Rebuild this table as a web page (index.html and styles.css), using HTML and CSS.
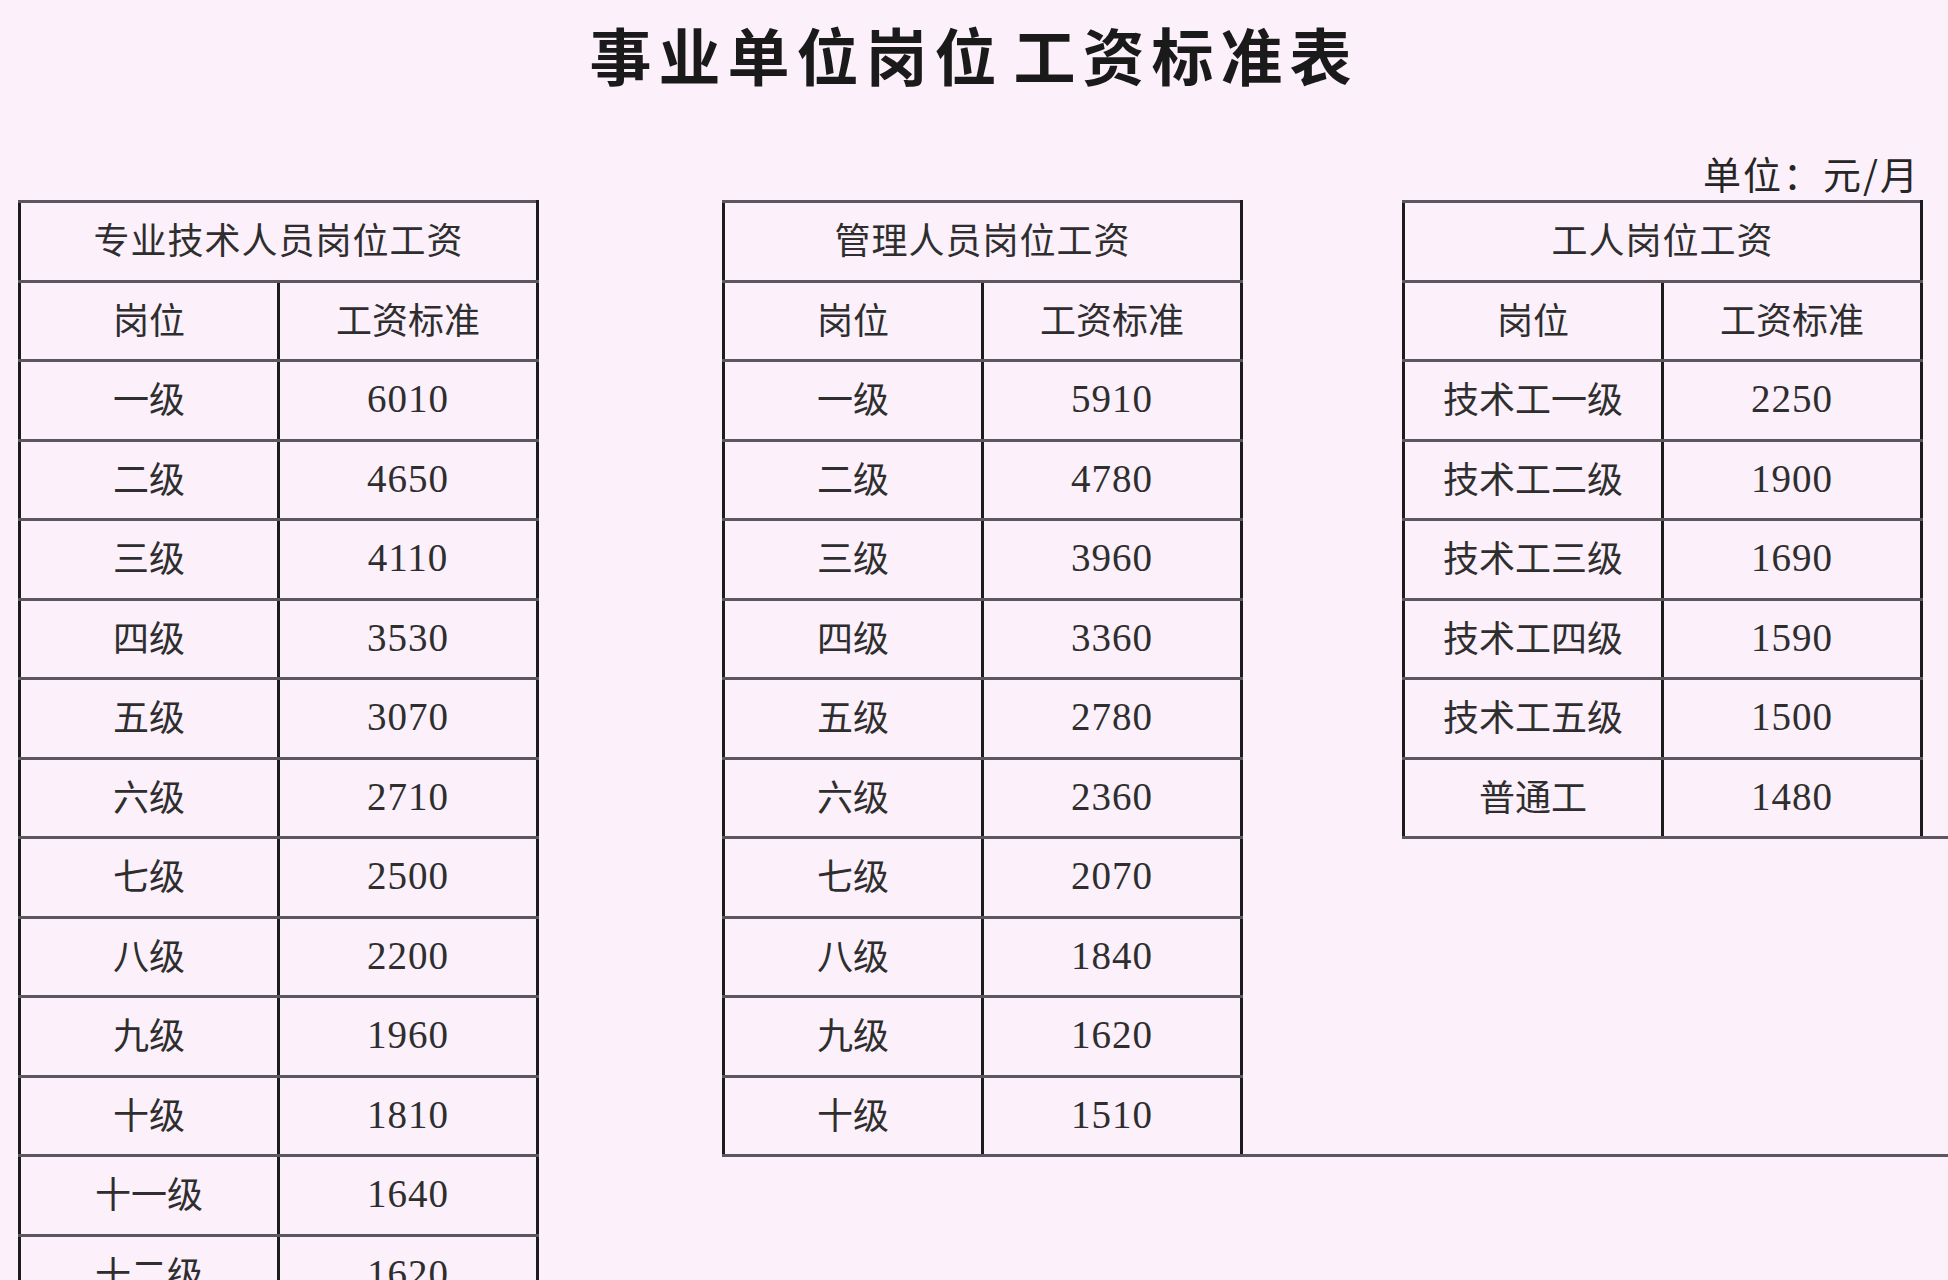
FILE: index.html
```html
<!DOCTYPE html>
<html lang="zh-CN">
<head>
<meta charset="utf-8">
<title>事业单位岗位工资标准表</title>
<link rel="stylesheet" href="styles.css">
</head>
<body>
<h1 class="title">事业单位岗位<span class="title-gap">工资标准表</span></h1>
<div class="unit">单位：元/月</div>
<main class="tables">
  <div class="tbl tbl-pro">
    <table>
      <colgroup><col class="c1"><col class="c2"></colgroup>
      <tr><th colspan="2" class="cap">专业技术人员岗位工资</th></tr>
      <tr><th>岗位</th><th>工资标准</th></tr>
      <tr><td>一级</td><td class="num">6010</td></tr>
      <tr><td>二级</td><td class="num">4650</td></tr>
      <tr><td>三级</td><td class="num">4110</td></tr>
      <tr><td>四级</td><td class="num">3530</td></tr>
      <tr><td>五级</td><td class="num">3070</td></tr>
      <tr><td>六级</td><td class="num">2710</td></tr>
      <tr><td>七级</td><td class="num">2500</td></tr>
      <tr><td>八级</td><td class="num">2200</td></tr>
      <tr><td>九级</td><td class="num">1960</td></tr>
      <tr><td>十级</td><td class="num">1810</td></tr>
      <tr><td>十一级</td><td class="num">1640</td></tr>
      <tr><td>十二级</td><td class="num">1620</td></tr>
    </table>
  </div>
  <div class="tbl tbl-mgr extend">
    <table>
      <colgroup><col class="c1"><col class="c2"></colgroup>
      <tr><th colspan="2" class="cap">管理人员岗位工资</th></tr>
      <tr><th>岗位</th><th>工资标准</th></tr>
      <tr><td>一级</td><td class="num">5910</td></tr>
      <tr><td>二级</td><td class="num">4780</td></tr>
      <tr><td>三级</td><td class="num">3960</td></tr>
      <tr><td>四级</td><td class="num">3360</td></tr>
      <tr><td>五级</td><td class="num">2780</td></tr>
      <tr><td>六级</td><td class="num">2360</td></tr>
      <tr><td>七级</td><td class="num">2070</td></tr>
      <tr><td>八级</td><td class="num">1840</td></tr>
      <tr><td>九级</td><td class="num">1620</td></tr>
      <tr><td>十级</td><td class="num">1510</td></tr>
    </table>
  </div>
  <div class="tbl tbl-wrk extend">
    <table>
      <colgroup><col class="c1"><col class="c2"></colgroup>
      <tr><th colspan="2" class="cap">工人岗位工资</th></tr>
      <tr><th>岗位</th><th>工资标准</th></tr>
      <tr><td>技术工一级</td><td class="num">2250</td></tr>
      <tr><td>技术工二级</td><td class="num">1900</td></tr>
      <tr><td>技术工三级</td><td class="num">1690</td></tr>
      <tr><td>技术工四级</td><td class="num">1590</td></tr>
      <tr><td>技术工五级</td><td class="num">1500</td></tr>
      <tr><td>普通工</td><td class="num">1480</td></tr>
    </table>
  </div>
</main>
</body>
</html>
```
FILE: styles.css
```css
html, body {
  margin: 0;
  padding: 0;
  overflow: hidden;
  background: #fcf0fb;
}
body {
  width: 1948px;
  height: 1280px;
  font-family: "Noto Sans CJK SC", "Noto Sans", sans-serif;
  color: #2e2e2e;
}
.title {
  margin: 0;
  padding-top: 22px;
  height: 64px;
  font-size: 62px;
  line-height: 64px;
  font-weight: 700;
  letter-spacing: 7px;
  text-align: center;
  color: #1a1a1a;
}
.title-gap {
  margin-left: 10px;
}
.unit {
  margin-top: 67px;
  height: 40px;
  line-height: 40px;
  font-size: 38px;
  letter-spacing: 2px;
  text-align: right;
  padding-right: 28px;
  color: #262626;
}
.tables {
  display: flex;
  align-items: flex-start;
  margin-top: 7px;
  padding-left: 18px;
}
.tbl {
  position: relative;
}
.tbl-mgr {
  margin-left: 183px;
}
.tbl-wrk {
  margin-left: 159px;
}
.extend::after {
  content: "";
  position: absolute;
  left: 100%;
  bottom: 0;
  width: 900px;
  height: 3px;
  background: #5c5660;
}
table {
  border-collapse: collapse;
  table-layout: fixed;
  width: 518px;
}
.c1, .c2 {
  width: 259px;
}
tr {
  height: 79.5px;
}
th, td {
  padding: 0 0 6px;
  text-align: center;
  vertical-align: middle;
  font-weight: 400;
  font-size: 36px;
  line-height: 40px;
  border-top: 3px solid #5c5660;
  border-bottom: 3px solid #5c5660;
  border-left: 3px solid #1c1c1c;
  border-right: 3px solid #1c1c1c;
  color: #2e2e2e;
}
.cap {
  letter-spacing: 1px;
}
td.num {
  padding-bottom: 2px;
  font-family: "Liberation Serif", "Noto Sans CJK SC", serif;
  font-size: 39px;
  letter-spacing: 1px;
}
```
